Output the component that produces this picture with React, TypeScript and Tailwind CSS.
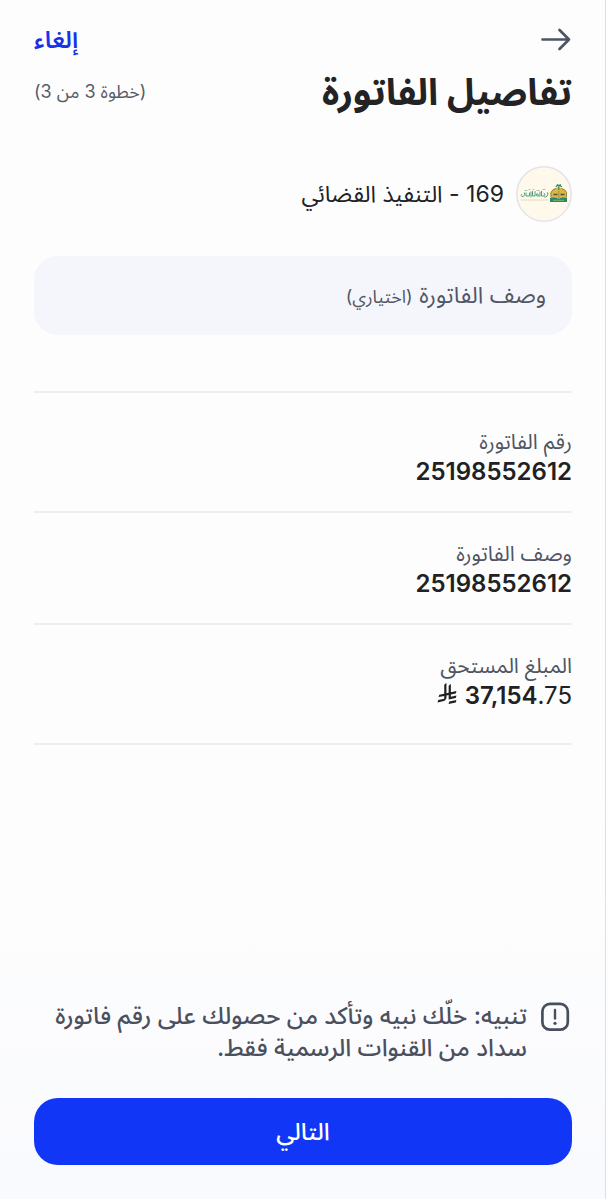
import type { ReactNode } from 'react';

function ArrowIcon() {
  return (
    <svg width="32" height="24" viewBox="0 0 32 24" fill="none" stroke="#4b5563" strokeWidth="2.7" strokeLinecap="round" strokeLinejoin="round" aria-hidden="true">
      <path d="M2.5 11.5H29M19.5 2L29 11.5L19.5 21" />
    </svg>
  );
}

function AlertIcon() {
  return (
    <svg className="shrink-0" width="32" height="32" viewBox="0 0 32 32" fill="none" stroke="#474e5c" strokeLinecap="round" aria-hidden="true">
      <rect x="2.4" y="3.9" width="25.4" height="25.8" rx="7.5" strokeWidth="2.7" />
      <path d="M15 10V18.5" strokeWidth="2.4" />
      <circle cx="15" cy="23.3" r="1.6" fill="#474e5c" stroke="none" />
    </svg>
  );
}

function RiyalSign() {
  return (
    <svg width="20" height="21" viewBox="0 0 1124 1256" fill="#212124" role="img" aria-label="ريال">
      <path d="M699.62 1113.02c-20.06 44.48-33.32 92.75-38.4 143.37l424.51-90.24c20.06-44.47 33.31-92.75 38.4-143.37l-424.51 90.24Z" />
      <path d="M1085.73 895.8c20.06-44.47 33.32-92.75 38.4-143.37l-330.68 70.33v-135.2l292.27-62.11c20.06-44.47 33.32-92.75 38.4-143.37l-330.68 70.27V66.13c-50.67 28.45-95.67 66.32-132.25 110.99v403.35l-132.25 28.11V0c-50.67 28.44-95.67 66.32-132.25 110.99v525.69l-295.91 62.88c-20.06 44.47-33.33 92.75-38.42 143.37l334.33-71.05v170.26l-358.3 76.14c-20.06 44.47-33.32 92.75-38.4 143.37l375.04-79.7c30.53-6.35 56.77-24.4 73.83-49.24l68.78-101.97c7.14-10.55 11.3-23.27 11.3-36.99v-149.98l132.25-28.11v270.4l424.53-90.28Z" />
    </svg>
  );
}

function MinistryLogo() {
  return (
    <svg className="shrink-0" width="56" height="56" viewBox="0 0 56 56" fill="none" aria-hidden="true">
      <circle cx="28" cy="28" r="27.2" fill="#fff9eb" stroke="#e6e3e9" strokeWidth="1.6" />
      <path d="M34.5 32V27Q35.5 23.5 39 22.5L42.5 21L46.5 22.5Q50 23.5 51 27V32Z" fill="#dcb44c" />
      <path d="M35 31V26.5Q36.5 23 40 22.5M50.5 31V26.5Q49 23 45.5 22.5" stroke="#8f8236" strokeWidth="0.9" />
      <path d="M37.5 28.5H41.5M44.5 28.5H48.5" stroke="#4c5a2a" strokeWidth="1.3" />
      <path d="M42.8 25V32" stroke="#a8862e" strokeWidth="0.9" />
      <path d="M42.8 24V19M39.8 21Q41.5 18.6 42.8 20.2Q44 18.6 45.8 21M40.8 18.6L42.8 19.6L44.8 18.6" stroke="#2f8a62" strokeWidth="1.1" />
      <path d="M34 32Q38 31 42.8 32.6Q47 31 51 32V36H34Z" fill="#2a8765" />
      <path d="M37 34.3H48" stroke="#9cba79" strokeWidth="0.8" />
      <g stroke="#4f9d82" strokeWidth="1" strokeLinecap="round">
        <path d="M31.5 26.5Q33 28 31 30Q30 31.5 28.5 31M28 27Q30 28 28 30H25.5V25.5M24 26V30H21.5Q19.5 30 20.5 28Q22 27 22.5 29M19 25.5V30H16.5V25.5M15 26V31M13.5 27V30H10V27M8.5 27Q9 31 6 30.5Q4.5 30 5.5 28.5" />
        <path d="M9 24.5H11M13 23.5H14M17 23.5H18M21 24.5H23M27 23.5H29" strokeWidth="0.8" opacity="0.7" />
      </g>
      <path d="M5 34H32" stroke="#c9ae70" strokeWidth="1.1" strokeDasharray="1.4 0.8" opacity="0.6" />
    </svg>
  );
}

function DetailRow({ label, children }: { label: string; children: ReactNode }) {
  return (
    <div className="border-b-2 border-[#eeeef1] py-[25px]">
      <dt className="text-[21px] leading-8 text-[#4f5563]">{label}</dt>
      <dd className="flex items-baseline gap-2 text-2xl leading-7 font-semibold text-[#212124]">{children}</dd>
    </div>
  );
}

export default function App() {
  return (
    <main dir="rtl" className="flex min-h-screen flex-col border-r border-[#dedfe2] bg-linear-to-b from-[#fdfdfd] from-75% to-[#f9fafe] to-100% pr-[33px] pl-[34px] pb-[34px] font-['Inter','Noto_Sans_Arabic','DejaVu_Sans',sans-serif]">
      <header className="pt-5">
        <div className="flex h-10 items-center justify-between">
          <button type="button" aria-label="رجوع"><ArrowIcon /></button>
          <button type="button" className="text-2xl font-semibold text-[#1733e8]">إلغاء</button>
        </div>
        <div className="flex h-16 items-center justify-between">
          <h1 className="text-[37px] font-bold text-[#232225]">تفاصيل الفاتورة</h1>
          <p className="text-lg text-[#585d69]">(خطوة 3 من 3)</p>
        </div>
      </header>

      <section className="mt-[42px] flex items-center gap-3">
        <MinistryLogo />
        <h2 className="text-[23px] text-[#212124]">169 - التنفيذ القضائي</h2>
      </section>

      <label className="mt-[34px] flex h-[79px] items-center rounded-3xl bg-[#f5f6fb] px-[26px] text-[#515765]">
        <span className="shrink-0 text-[23px]">وصف الفاتورة <span className="text-lg">(اختياري)</span></span>
        <input type="text" className="min-w-0 flex-1 bg-transparent text-[23px] outline-none" />
      </label>

      <dl className="mt-14 border-y-2 border-[#eeeef1] py-2 [&>div:last-child]:border-b-0">
        <DetailRow label="رقم الفاتورة">25198552612</DetailRow>
        <DetailRow label="وصف الفاتورة">25198552612</DetailRow>
        <DetailRow label="المبلغ المستحق">
          <span dir="ltr">37,154<span className="font-normal">.75</span></span>
          <RiyalSign />
        </DetailRow>
      </dl>

      <footer className="mt-auto pt-10">
        <div className="flex items-start gap-[13px]">
          <AlertIcon />
          <p className="text-2xl leading-8 font-medium text-[#4b505e]">تنبيه: خلّك نبيه وتأكد من حصولك على رقم فاتورة سداد من القنوات الرسمية فقط.</p>
        </div>
        <button type="button" className="mt-[34px] h-[67px] w-full rounded-3xl bg-[#1236f5] text-2xl font-medium text-white">التالي</button>
      </footer>
    </main>
  );
}
